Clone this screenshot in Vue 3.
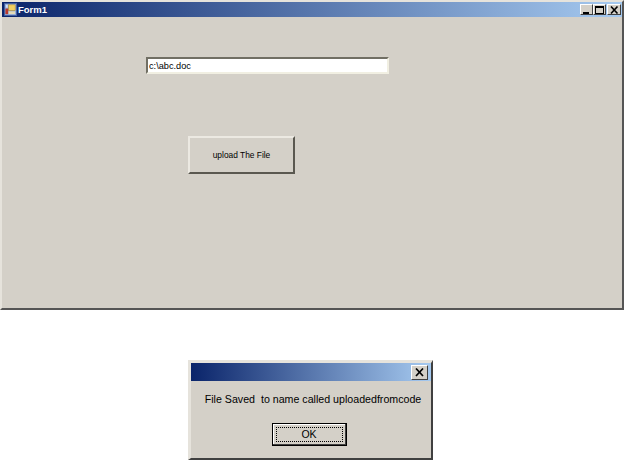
<script setup>
const title = 'Form1'
const path = 'c:\\abc.doc'
const message = 'File Saved  to name called uploadedfromcode'
</script>

<template>
  <div class="page">
    <section class="window main">
      <header class="titlebar">
        <svg class="appicon" width="14" height="14" viewBox="0 0 14 14">
          <rect x="0" y="0" width="14" height="14" fill="#8fa8d8" />
          <rect x="0.5" y="0.5" width="13" height="13" fill="none" stroke="#3d5a9c" />
          <rect x="5" y="2" width="7" height="6" fill="#f2d060" stroke="#b08a20" stroke-width="0.6" />
          <rect x="2" y="2" width="2" height="3" fill="#d8e0f0" />
          <rect x="1.5" y="6" width="3" height="6" fill="#b8382c" />
          <rect x="5" y="9" width="7" height="3" fill="#e4dcb8" />
        </svg>
        <span class="title">{{ title }}</span>
        <div class="controls">
          <button class="cap"><svg width="9" height="8" viewBox="0 0 9 8"><rect x="1" y="6" width="6" height="2" fill="#000" /></svg></button>
          <button class="cap"><svg width="9" height="8" viewBox="0 0 9 8"><path d="M0 0H9V8H0Z M1 2V7H8V2Z" fill="#000" fill-rule="evenodd" /></svg></button>
          <button class="cap close"><svg width="9" height="8" viewBox="0 0 9 8"><path d="M1 0.5L7.5 7.5M7.5 0.5L1 7.5" stroke="#000" stroke-width="1.6" /></svg></button>
        </div>
      </header>
      <div class="client">
        <input class="field" :value="path" readonly />
        <button class="upload">upload The File</button>
      </div>
    </section>

    <section class="window dialog">
      <header class="titlebar dlgbar">
        <button class="cap close dlgclose"><svg width="10" height="9" viewBox="0 0 10 9"><path d="M1 0.5L8 8M8 0.5L1 8" stroke="#000" stroke-width="1.7" /></svg></button>
      </header>
      <p class="message">{{ message }}</p>
      <button class="ok"><span class="oklabel">OK</span></button>
    </section>
  </div>
</template>

<style scoped>
.page {
  width: 626px;
  height: 463px;
  background: #fff;
  font-family: "Liberation Sans", Arial, sans-serif;
  font-size: 11px;
  color: #000;
  overflow: hidden;
}
.window {
  box-sizing: border-box;
  background: #d4d0c8;
  border: 2px solid;
  border-color: #e6e3dc #555 #555 #e6e3dc;
}
.main {
  width: 624px;
  height: 310px;
  margin-bottom: 50px;
}
.titlebar {
  display: flex;
  align-items: center;
  height: 15px;
  background: linear-gradient(90deg, #0a246a, #a6caf0);
}
.appicon {
  width: 13px;
  height: 13px;
  margin: 0 1px 0 2px;
}
.title {
  color: #fff;
  font-weight: bold;
  font-size: 9.5px;
}
.controls {
  margin-left: auto;
  display: flex;
  margin-right: 1px;
}
.cap {
  box-sizing: border-box;
  width: 13px;
  height: 11px;
  padding: 0;
  display: flex;
  align-items: center;
  justify-content: center;
  background: #d4d0c8;
  border: 1px solid;
  border-color: #fff #404040 #404040 #fff;
}
.cap.close {
  width: 14px;
  margin-left: 1px;
}
.client {
  display: flex;
  flex-direction: column;
  align-items: flex-start;
}
.field {
  box-sizing: border-box;
  width: 243px;
  height: 17px;
  margin: 40px 0 0 144px;
  padding: 0 0 0 1px;
  font: 9.2px "Liberation Sans", Arial, sans-serif;
  color: #000;
  background: #fff;
  border: 2px solid;
  border-color: #716f64 #f1efe2 #f1efe2 #716f64;
  outline: none;
}
.upload {
  box-sizing: border-box;
  width: 107px;
  height: 38px;
  margin: 62px 0 0 186px;
  padding: 0;
  font: 8.4px "Liberation Sans", Arial, sans-serif;
  background: #d4d0c8;
  color: #000;
  border: 2px solid;
  border-color: #ece9e2 #5a5850 #5a5850 #ece9e2;
}
.dialog {
  width: 245px;
  height: 100px;
  margin-left: 188px;
  border-width: 3px 2px 2px 3px;
  border-color: #e6e3dc #404040 #404040 #e6e3dc;
  display: flex;
  flex-direction: column;
  align-items: center;
}
.dlgbar {
  align-self: stretch;
  height: 18px;
  justify-content: flex-end;
}
.cap.dlgclose {
  width: 17px;
  height: 15px;
  margin-right: 3px;
}
.message {
  margin: 12px 0 0 4px;
  font-size: 10.65px;
  line-height: 13px;
  white-space: pre;
}
.ok {
  box-sizing: border-box;
  width: 75px;
  height: 23px;
  margin: 17px 0 0 -4px;
  padding: 3px;
  background: #d4d0c8;
  border: 1px solid #000;
  box-shadow: inset -1px -1px 0 #404040, inset 1px 1px 0 #fff;
  font: 10.5px "Liberation Sans", Arial, sans-serif;
  color: #000;
}
.oklabel {
  box-sizing: border-box;
  display: block;
  height: 100%;
  line-height: 13px;
  border: 1px dotted #000;
}
</style>
